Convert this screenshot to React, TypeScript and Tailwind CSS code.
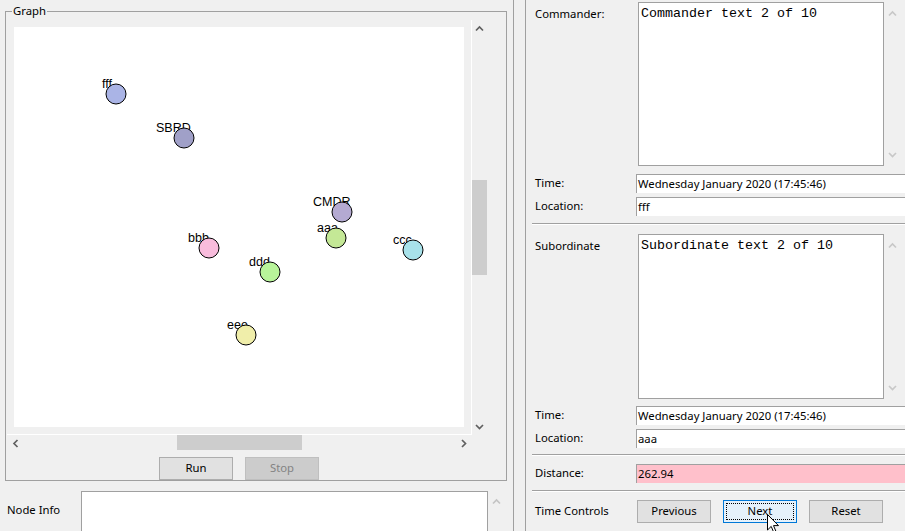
import React from "react";

type Dir = "up" | "down" | "left" | "right";

const chevronPoints: Record<Dir, string> = {
  up: "1,5.5 4.5,2 8,5.5",
  down: "1,2 4.5,5.5 8,2",
  left: "5.5,1 2,4.5 5.5,8",
  right: "2,1 5.5,4.5 2,8",
};

function Chevron({ dir, className }: { dir: Dir; className: string }) {
  const vertical = dir === "up" || dir === "down";
  return (
    <svg
      width={vertical ? 9 : 7}
      height={vertical ? 7 : 9}
      viewBox={vertical ? "0 0 9 7" : "0 0 7 9"}
      className={className}
    >
      <polyline points={chevronPoints[dir]} fill="none" stroke="currentColor" strokeWidth="1.7" />
    </svg>
  );
}

interface GraphNode {
  id: string;
  x: number;
  y: number;
  labelX: number;
  fill: string;
}

// coordinates relative to the white canvas
const nodes: GraphNode[] = [
  { id: "fff", x: 102, y: 67, labelX: 88, fill: "#aab4e6" },
  { id: "SBRD", x: 170, y: 111, labelX: 142, fill: "#a0a0c8" },
  { id: "CMDR", x: 328, y: 185, labelX: 299, fill: "#b4aad2" },
  { id: "aaa", x: 322, y: 211, labelX: 303, fill: "#c4e896" },
  { id: "bbb", x: 195, y: 221, labelX: 174, fill: "#f8bcdc" },
  { id: "ccc", x: 399, y: 223, labelX: 379, fill: "#a8e2ea" },
  { id: "ddd", x: 256, y: 245, labelX: 235, fill: "#b8f49a" },
  { id: "eee", x: 232, y: 308, labelX: 213, fill: "#f0eeaa" },
];

function GraphCanvas() {
  return (
    <svg width={450} height={400} className="block bg-white">
      {nodes.map((n) => (
        <g key={n.id}>
          <text
            x={n.labelX}
            y={n.y - 6}
            fontFamily="'Liberation Sans', Arial, sans-serif"
            fontSize="12.5"
            fill="#000"
          >
            {n.id}
          </text>
          <circle cx={n.x} cy={n.y} r={10} fill={n.fill} stroke="#000" strokeWidth="1" />
        </g>
      ))}
    </svg>
  );
}

function GraphGroup() {
  return (
    <div className="relative ml-[5px] mt-[11px] h-[476px] w-[502px] border border-[#a0a0a0]">
      <span className="absolute -top-[9px] left-[6px] bg-[#f0f0f0] px-[1px] leading-[16px]">Graph</span>

      <div className="grid grid-cols-[465px_15px] grid-rows-[415px_16px] pl-[1px] pt-[8px]">
        {/* viewport */}
        <div className="border-b border-r border-white p-[7px]">
          <GraphCanvas />
        </div>

        {/* vertical scrollbar */}
        <div className="flex flex-col items-center">
          <div className="flex h-[17px] items-center">
            <Chevron dir="up" className="text-[#606060]" />
          </div>
          <div className="h-[143px]" />
          <div className="h-[95px] w-[15px] bg-[#cdcdcd]" />
          <div className="flex-1" />
          <div className="flex h-[17px] items-center">
            <Chevron dir="down" className="text-[#606060]" />
          </div>
        </div>

        {/* horizontal scrollbar */}
        <div className="flex items-center">
          <div className="flex w-[17px] justify-center">
            <Chevron dir="left" className="text-[#606060]" />
          </div>
          <div className="w-[153px]" />
          <div className="h-[15px] w-[125px] self-start bg-[#cdcdcd]" />
          <div className="flex-1" />
          <div className="flex w-[17px] justify-center">
            <Chevron dir="right" className="text-[#606060]" />
          </div>
        </div>
        <div />
      </div>

      <div className="flex gap-[12px] pl-[153px] pt-[6px]">
        <button className="h-[23px] w-[74px] border border-[#adadad] bg-[#e1e1e1]">Run</button>
        <button className="h-[23px] w-[74px] border border-[#bfbfbf] bg-[#cccccc] text-[#838383]">Stop</button>
      </div>
    </div>
  );
}

function LeftPanel() {
  return (
    <div className="flex w-[513px] shrink-0 flex-col">
      <GraphGroup />
      <div className="mt-[10px] flex">
        <div className="w-[81px] pl-[7px] pt-[11px]">Node Info</div>
        <div className="h-[60px] w-[407px] border border-[#a0a0a0] bg-white" />
        <div className="flex w-[17px] justify-center pt-[7px]">
          <Chevron dir="up" className="text-[#c4c4c4]" />
        </div>
      </div>
    </div>
  );
}

function TextBlock({ label, text, height }: { label: string; text: string; height: number }) {
  return (
    <div className="flex">
      <div className="w-[112px] pl-[9px] pt-[4px]">{label}</div>
      <div
        className="w-[246px] border border-[#a0a0a0] bg-white pl-[2px] pt-[3px] font-['Liberation_Mono',monospace] text-[13.33px] leading-[15px]"
        style={{ height }}
      >
        {text}
      </div>
      <div className="flex w-[17px] flex-col items-center justify-between py-[8px]">
        <Chevron dir="up" className="text-[#c8c8c8]" />
        <Chevron dir="down" className="text-[#c8c8c8]" />
      </div>
    </div>
  );
}

function Field({ label, value, className = "", pink = false }: { label: string; value: string; className?: string; pink?: boolean }) {
  return (
    <div className={`flex items-center ${className}`}>
      <div className="w-[110px] pl-[9px]">{label}</div>
      <div
        className={`h-[19px] flex-1 border-l border-t border-[#a0a0a0] pl-[1px] leading-[18px] ${pink ? "bg-[#ffc0cb]" : "bg-white"}`}
      >
        {value}
      </div>
    </div>
  );
}

function Separator({ className }: { className: string }) {
  return <div className={`ml-[6px] h-[2px] border-b border-t border-b-white border-t-[#a0a0a0] ${className}`} />;
}

function RightPanel() {
  return (
    <div className="flex w-[379px] shrink-0 flex-col pt-[2px]">
      <TextBlock label="Commander:" text="Commander text 2 of 10" height={164} />
      <Field label="Time:" value="Wednesday January 2020 (17:45:46)" className="mt-[8px]" />
      <Field label="Location:" value="fff" className="mt-[4px]" />
      <Separator className="mt-[7px]" />

      <div className="mt-[9px]">
        <TextBlock label="Subordinate" text="Subordinate text 2 of 10" height={165} />
      </div>
      <Field label="Time:" value="Wednesday January 2020 (17:45:46)" className="mt-[7px]" />
      <Field label="Location:" value="aaa" className="mt-[4px]" />
      <Separator className="mt-[6px]" />

      <Field label="Distance:" value="262.94" className="mt-[8px]" pink />
      <Separator className="mt-[7px]" />

      <div className="mt-[8px] flex items-center">
        <div className="w-[111px] pl-[9px]">Time Controls</div>
        <div className="flex gap-[12px]">
          <button className="h-[23px] w-[74px] border border-[#adadad] bg-[#e1e1e1]">Previous</button>
          <button className="relative h-[23px] w-[74px] border border-[#0078d7] bg-[#e5f1fb]">
            <span className="absolute inset-[2px] border border-dotted border-black" />
            Next
          </button>
          <button className="h-[23px] w-[74px] border border-[#adadad] bg-[#e1e1e1]">Reset</button>
        </div>
      </div>
    </div>
  );
}

function Cursor() {
  return (
    <svg width={13} height={20} viewBox="0 0 13 20" className="pointer-events-none absolute left-[767px] top-[514px]">
      <polygon
        points="0.5,0.5 0.5,16 4.2,12.4 6.8,18.5 9,17.5 6.5,11.6 11.5,11.6"
        fill="#fff"
        stroke="#000"
        strokeWidth="1"
        strokeLinejoin="miter"
      />
    </svg>
  );
}

export default function App() {
  return (
    <div className="relative flex h-[531px] w-[905px] overflow-hidden bg-[#f0f0f0] font-['Noto_Sans','Open_Sans',sans-serif] text-[11.3px] text-black">
      <LeftPanel />
      <div className="h-full w-[13px] shrink-0 border-x border-[#a0a0a0]" />
      <RightPanel />
      <Cursor />
    </div>
  );
}
